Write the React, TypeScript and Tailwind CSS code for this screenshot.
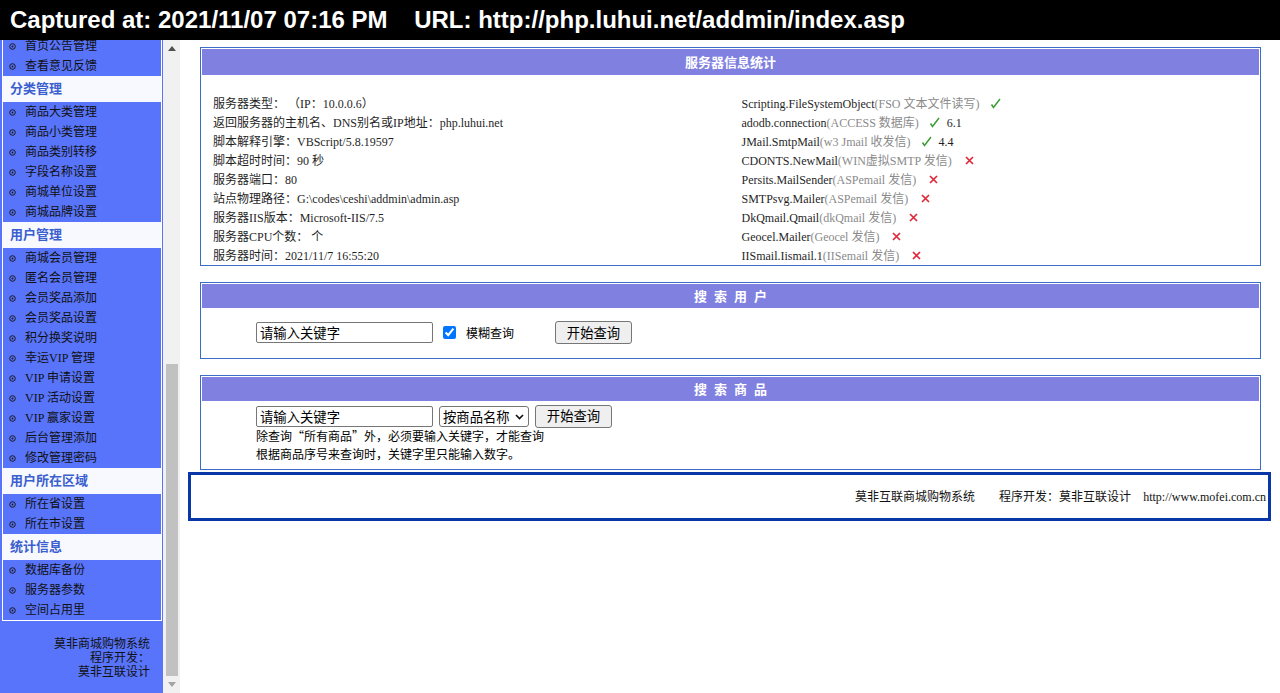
import React from "react";

const song = "font-['Liberation_Serif','Noto_Sans_CJK_SC',serif]";
const ui = "font-['Noto_Sans_CJK_SC','Liberation_Sans',sans-serif]";

const menu: { title?: string; items: string[] }[] = [
  { items: ["首页公告管理", "查看意见反馈"] },
  {
    title: "分类管理",
    items: ["商品大类管理", "商品小类管理", "商品类别转移", "字段名称设置", "商城单位设置", "商城品牌设置"],
  },
  {
    title: "用户管理",
    items: [
      "商城会员管理",
      "匿名会员管理",
      "会员奖品添加",
      "会员奖品设置",
      "积分换奖说明",
      "幸运VIP 管理",
      "VIP 申请设置",
      "VIP 活动设置",
      "VIP 赢家设置",
      "后台管理添加",
      "修改管理密码",
    ],
  },
  { title: "用户所在区域", items: ["所在省设置", "所在市设置"] },
  { title: "统计信息", items: ["数据库备份", "服务器参数", "空间占用里"] },
];

const serverInfo = [
  "服务器类型： （IP：10.0.0.6）",
  "返回服务器的主机名、DNS别名或IP地址：php.luhui.net",
  "脚本解释引擎：VBScript/5.8.19597",
  "脚本超时时间：90 秒",
  "服务器端口：80",
  "站点物理路径：G:\\codes\\ceshi\\addmin\\admin.asp",
  "服务器IIS版本：Microsoft-IIS/7.5",
  "服务器CPU个数： 个",
  "服务器时间：2021/11/7 16:55:20",
];

type Comp = { name: string; note: string; ok: boolean; ver?: string };
const components: Comp[] = [
  { name: "Scripting.FileSystemObject", note: "(FSO 文本文件读写)", ok: true },
  { name: "adodb.connection", note: "(ACCESS 数据库)", ok: true, ver: "6.1" },
  { name: "JMail.SmtpMail", note: "(w3 Jmail 收发信)", ok: true, ver: "4.4" },
  { name: "CDONTS.NewMail", note: "(WIN虚拟SMTP 发信)", ok: false },
  { name: "Persits.MailSender", note: "(ASPemail 发信)", ok: false },
  { name: "SMTPsvg.Mailer", note: "(ASPemail 发信)", ok: false },
  { name: "DkQmail.Qmail", note: "(dkQmail 发信)", ok: false },
  { name: "Geocel.Mailer", note: "(Geocel 发信)", ok: false },
  { name: "IISmail.Iismail.1", note: "(IISemail 发信)", ok: false },
];

function Dot() {
  return (
    <svg width="7" height="7" viewBox="0 0 7 7" className="shrink-0">
      <circle cx="3.5" cy="3.5" r="2.8" fill="none" stroke="#1a1a1a" strokeWidth="1" />
      <circle cx="3.5" cy="3.5" r="0.9" fill="#1a1a1a" />
    </svg>
  );
}

// small slanted tick, like the old √ gif
function Check() {
  return (
    <svg width="11" height="11" viewBox="0 0 11 11" className="inline-block align-[-1px] ml-[10px]">
      <path d="M1.5 6.5L3.5 9.5L10 1" fill="none" stroke="#3d9b35" strokeWidth="1.5" />
    </svg>
  );
}

function Cross() {
  return (
    <svg width="9" height="9" viewBox="0 0 9 9" className="inline-block align-[0px] ml-[13px]">
      <path d="M1 1L8 8M8 1L1 8" stroke="#e0283a" strokeWidth="1.7" />
    </svg>
  );
}

function Panel({ title, head, children }: { title: React.ReactNode; head: string; children: React.ReactNode }) {
  return (
    <div className="ml-[20px] mr-[19px] border border-[#3a6cc8] p-px">
      <div className={`${head} bg-[#8080e0] flex items-center justify-center gap-[7px] text-white font-bold text-[13px] ${ui}`}>
        {title}
      </div>
      {children}
    </div>
  );
}

function Spaced({ text }: { text: string }) {
  return (
    <>
      {text.split("").map((c, i) => (
        <span key={i}>{c}</span>
      ))}
    </>
  );
}

function KeywordInput() {
  return (
    <input
      defaultValue="请输入关键字"
      className={`w-[177px] h-[21px] border border-[#767676] rounded-[2px] px-[3px] text-[13.33px] text-black bg-white ${ui}`}
    />
  );
}

function QueryButton({ className = "" }: { className?: string }) {
  return (
    <button
      className={`w-[77px] h-[23px] border border-[#767676] rounded-[3px] bg-[#efefef] text-[13.33px] text-black ${ui} ${className}`}
    >
      开始查询
    </button>
  );
}

export default function App() {
  return (
    <div className="w-[1280px] h-[693px] flex flex-col overflow-hidden bg-white">
      <div className="h-[40px] shrink-0 bg-black text-white font-bold text-[24px] leading-[40px] pl-[10px] whitespace-pre font-['Liberation_Sans',Arial,sans-serif]">
        {"Captured at: 2021/11/07 07:16 PM    URL: http://php.luhui.net/addmin/index.asp"}
      </div>

      <div className="flex flex-1 min-h-0">
        {/* left menu frame */}
        <aside className={`w-[163px] shrink-0 bg-[#5874fa] overflow-hidden ${song}`}>
          <div className="-mt-[5px] pl-[2px]">
            <div className="w-[160px] border border-white">
              {menu.map((g, gi) => (
                <div key={gi}>
                  {g.title && (
                    <div className="h-[26px] bg-[#f7f9ff] pl-[7px] flex items-center text-[13px] font-bold text-[#3c5fcf]">
                      {g.title}
                    </div>
                  )}
                  {g.items.map((it) => (
                    <div key={it} className="h-[20px] pl-[6px] flex items-center text-[12px] text-[#111] whitespace-pre">
                      <Dot />
                      <span className="ml-[9px]">{it}</span>
                    </div>
                  ))}
                </div>
              ))}
            </div>
            <div className="w-[160px] mt-[16px] pr-[12px] text-right text-[12px] leading-[14px] text-[#111]">
              莫非商城购物系统
              <br />
              程序开发：
              <br />
              莫非互联设计
            </div>
          </div>
        </aside>

        {/* frame scrollbar */}
        <div className="w-[17px] shrink-0 bg-[#f1f1f1] flex flex-col">
          <div className="h-[17px] flex items-center justify-center">
            <svg width="8" height="5" viewBox="0 0 8 5">
              <path d="M0 5L4 0L8 5Z" fill="#505050" />
            </svg>
          </div>
          <div className="flex-1">
            <div className="ml-[3px] w-[12px] mt-[307px] h-[312px] bg-[#c1c1c1]" />
          </div>
          <div className="h-[17px] flex items-center justify-center">
            <svg width="8" height="5" viewBox="0 0 8 5">
              <path d="M0 0L4 5L8 0Z" fill="#a3a3a3" />
            </svg>
          </div>
        </div>

        {/* main frame */}
        <main className="flex-1 min-w-0 pt-[7px]">
          <Panel title="服务器信息统计" head="h-[26px]">
            <div className={`grid grid-cols-2 pt-[18px] text-[12px] leading-[23px] text-[#1f1f1f] ${song}`}>
              <div className="pl-[11px]">
                {serverInfo.map((s) => (
                  <div key={s} className="h-[19px] whitespace-pre">
                    {s}
                  </div>
                ))}
              </div>
              <div className="pl-[11px]">
                {components.map((c) => (
                  <div key={c.name} className="h-[19px] whitespace-pre">
                    <span>{c.name}</span>
                    <span className="text-[#8a8a8a]">{c.note}</span>
                    {c.ok ? <Check /> : <Cross />}
                    {c.ver && <span className="ml-[7px]">{c.ver}</span>}
                  </div>
                ))}
              </div>
            </div>
          </Panel>

          <div className="mt-[16px]">
            <Panel title={<Spaced text="搜索用户" />} head="h-[24px]">
              <div className="h-[49px] pl-[54px] flex items-center">
                <KeywordInput />
                <input type="checkbox" defaultChecked className="ml-[10px] w-[13px] h-[13px] accent-[#0075ff]" />
                <span className={`ml-[10px] text-[12px] text-black ${ui}`}>模糊查询</span>
                <QueryButton className="ml-[41px]" />
              </div>
            </Panel>
          </div>

          <div className="mt-[16px]">
            <Panel title={<Spaced text="搜索商品" />} head="h-[24px]">
              <div className={`pt-[4px] pb-[5px] pl-[54px] text-[12px] text-black ${ui}`}>
                <div className="h-[22px] flex items-center">
                  <KeywordInput />
                  <div className="relative ml-[6px]">
                    <select
                      defaultValue="name"
                      className={`appearance-none w-[90px] h-[21px] border border-[#767676] rounded-[3px] bg-white pl-[3px] text-[13.33px] text-black ${ui}`}
                    >
                      <option value="name">按商品名称</option>
                      <option value="id">按商品序号</option>
                      <option value="all">所有商品</option>
                    </select>
                    <svg
                      width="9"
                      height="6"
                      viewBox="0 0 9 6"
                      className="absolute right-[5px] top-[8px] pointer-events-none"
                    >
                      <path d="M1 1L4.5 4.5L8 1" fill="none" stroke="#111" strokeWidth="1.6" />
                    </svg>
                  </div>
                  <QueryButton className="ml-[6px]" />
                </div>
                <div className="leading-[18px]">除查询“所有商品”外，必须要输入关键字，才能查询</div>
                <div className="leading-[18px]">根据商品序号来查询时，关键字里只能输入数字。</div>
              </div>
            </Panel>
          </div>

          <div
            className={`mt-[2px] ml-[8px] mr-[9px] h-[49px] border-[3px] border-[#0a37a8] flex items-center justify-end pr-[2px] text-[12px] text-[#111] whitespace-pre ${song}`}
          >
            <span>莫非互联商城购物系统</span>
            <span className="ml-[24px]">程序开发：莫非互联设计</span>
            <span className="ml-[12px]">http://www.mofei.com.cn</span>
          </div>
        </main>
      </div>
    </div>
  );
}
